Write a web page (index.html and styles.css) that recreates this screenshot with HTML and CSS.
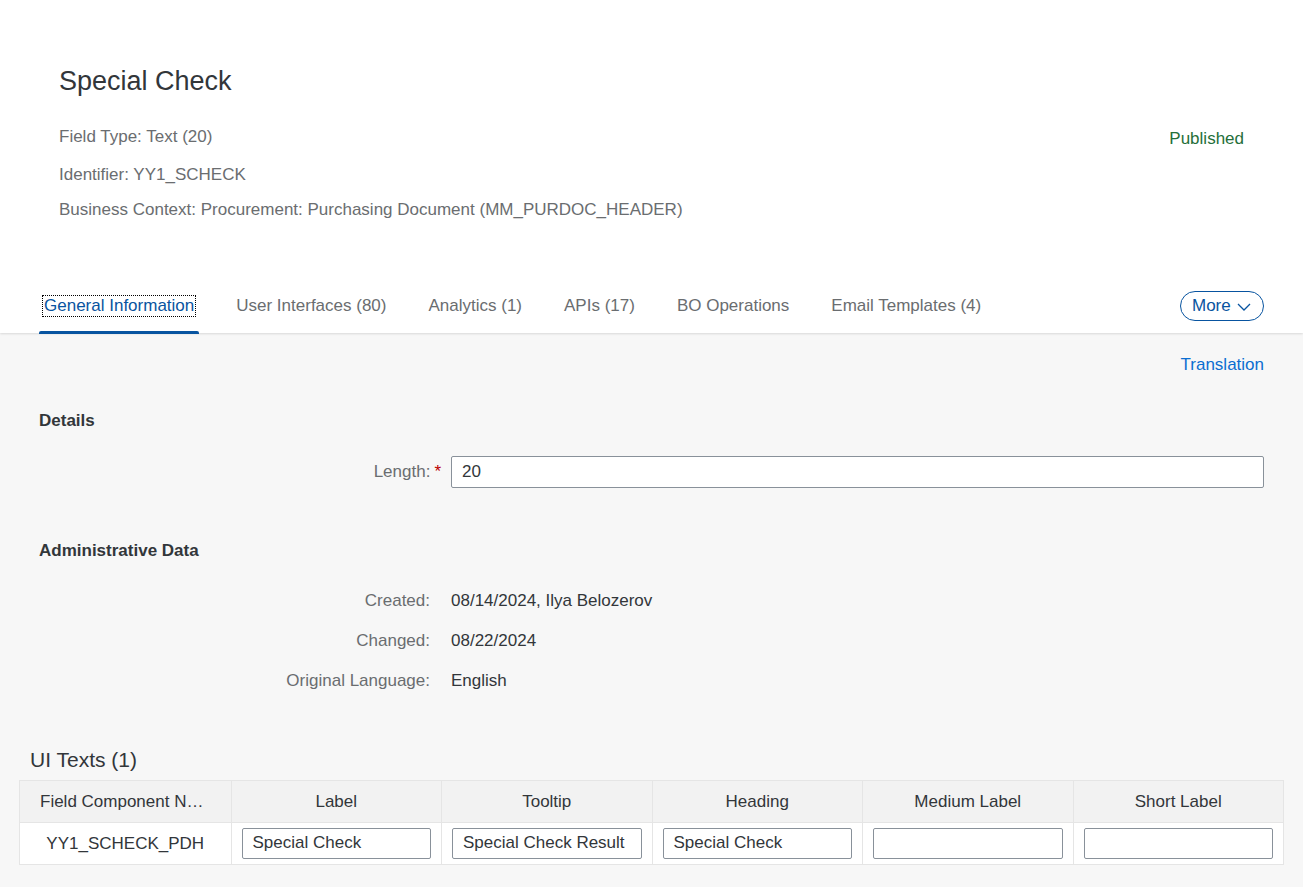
FILE: index.html
```html
<!DOCTYPE html>
<html lang="en">
<head>
<meta charset="utf-8">
<title>Special Check</title>
<link rel="stylesheet" href="styles.css">
</head>
<body>
<div class="page-header">
  <div class="obj-header">
    <div class="obj-main">
      <h1 class="obj-title">Special Check</h1>
      <div class="obj-attr">Field Type: Text (20)</div>
      <div class="obj-attr">Identifier: YY1_SCHECK</div>
      <div class="obj-attr">Business Context: Procurement: Purchasing Document (MM_PURDOC_HEADER)</div>
    </div>
    <div class="obj-status">Published</div>
  </div>
  <div class="tabbar">
    <div class="tabs">
      <div class="tab selected"><span class="tab-text focus">General Information</span></div>
      <div class="tab"><span class="tab-text">User Interfaces (80)</span></div>
      <div class="tab"><span class="tab-text">Analytics (1)</span></div>
      <div class="tab"><span class="tab-text">APIs (17)</span></div>
      <div class="tab"><span class="tab-text">BO Operations</span></div>
      <div class="tab"><span class="tab-text">Email Templates (4)</span></div>
    </div>
    <button class="more-btn">More
      <svg class="chev" width="14" height="8" viewBox="0 0 14 8"><path d="M1 1 L7 7 L13 1" fill="none" stroke="#0854a0" stroke-width="1.3"/></svg>
    </button>
  </div>
</div>
<div class="content">
  <div class="toolbar"><a class="link">Translation</a></div>
  <h2 class="section-title">Details</h2>
  <div class="form">
    <div class="form-row">
      <div class="form-label req-label">Length:<span class="req">*</span></div>
      <div class="form-value"><div class="input wide">20</div></div>
    </div>
  </div>
  <h2 class="section-title admin">Administrative Data</h2>
  <div class="form">
    <div class="form-row text-row">
      <div class="form-label">Created:</div>
      <div class="form-value">08/14/2024, Ilya Belozerov</div>
    </div>
    <div class="form-row text-row">
      <div class="form-label">Changed:</div>
      <div class="form-value">08/22/2024</div>
    </div>
    <div class="form-row text-row">
      <div class="form-label">Original Language:</div>
      <div class="form-value">English</div>
    </div>
  </div>
  <h2 class="table-title">UI Texts (1)</h2>
  <div class="table">
    <div class="th"><span class="ellip">Field Component Name</span></div>
    <div class="th">Label</div>
    <div class="th">Tooltip</div>
    <div class="th">Heading</div>
    <div class="th">Medium Label</div>
    <div class="th">Short Label</div>
    <div class="td">YY1_SCHECK_PDH</div>
    <div class="td"><div class="input cell">Special Check</div></div>
    <div class="td"><div class="input cell">Special Check Result</div></div>
    <div class="td"><div class="input cell">Special Check</div></div>
    <div class="td"><div class="input cell"></div></div>
    <div class="td"><div class="input cell"></div></div>
  </div>
</div>
</body>
</html>
```
FILE: styles.css
```css
* { box-sizing: border-box; }
html, body { margin: 0; padding: 0; }
body {
  font-family: "Liberation Sans", Arial, sans-serif;
  font-size: 17px;
  color: #32363a;
  background: #f7f7f7;
  width: 1303px;
  height: 887px;
  overflow: hidden;
}
.page-header {
  background: #fff;
  box-shadow: 0 1px 2px rgba(0,0,0,0.12);
  position: relative;
  z-index: 1;
}
.obj-header {
  display: flex;
  justify-content: space-between;
  padding: 64px 59px 0 59px;
}
.obj-title {
  margin: 0 0 29px 0;
  font-size: 27px;
  font-weight: normal;
  line-height: 34px;
  color: #32363a;
}
.obj-attr {
  color: #6a6d70;
  line-height: 20px;
  margin-bottom: 18px;
}
.obj-attr + .obj-attr + .obj-attr { margin-top: -3px; }
.obj-attr:last-child { margin-bottom: 0; }
.obj-status {
  color: #256f3a;
  margin-top: 65px;
  line-height: 20px;
}
.tabbar {
  display: flex;
  align-items: center;
  justify-content: space-between;
  padding: 0 39px;
  margin-top: 62px;
  height: 51px;
}
.tabs {
  display: flex;
  gap: 32px;
  height: 100%;
  align-items: stretch;
}
.tab {
  display: flex;
  align-items: center;
  padding: 0 4px;
  color: #6a6d70;
  position: relative;
  padding-bottom: 3px;
}
.tab-text { line-height: 20px; padding: 0 1px; }
.tab.selected { color: #0854a0; }
.tab.selected::after {
  content: "";
  position: absolute;
  left: 0; right: 0; bottom: -1px;
  height: 3px;
  background: #0854a0;
  border-radius: 2px 2px 0 0;
}
.focus { outline: 1px dotted #000; outline-offset: 0; }
.more-btn {
  font-family: inherit;
  font-size: 17px;
  color: #0854a0;
  background: #fff;
  border: 1px solid #0854a0;
  border-radius: 15px;
  height: 30px;
  width: 84px;
  padding: 0 0 0 11px;
  display: flex;
  align-items: center;
  gap: 6px;
  margin-bottom: 3px;
}
.chev { margin-top: 1px; }
.content { padding: 0 39px; }
.toolbar {
  display: flex;
  justify-content: flex-end;
  padding-top: 22px;
  height: 62px;
}
.link { color: #0a6ed1; line-height: 20px; }
.section-title {
  margin: 16px 0 0 0;
  font-size: 17px;
  font-weight: bold;
  line-height: 20px;
}
.section-title.admin { margin-top: 53px; }
.form { margin-top: 25px; }
.form-row {
  display: flex;
  align-items: center;
}
.form-label {
  width: 402px;
  flex: none;
  text-align: right;
  color: #6a6d70;
  padding-right: 11px;
  line-height: 20px;
}
.req-label { padding-right: 0; }
.req { color: #bb0000; margin-left: 4px; }
.form-value { flex: 1; padding-left: 10px; line-height: 20px; }
.text-row { height: 40px; }
.text-row:first-child { margin-top: -5px; }
.input {
  background: #fff;
  border: 1px solid #89919a;
  border-radius: 2px;
  color: #32363a;
  line-height: 20px;
}
.input.wide { height: 32px; padding: 5px 10px; }
.table-title {
  margin: 46px 0 0 -9px;
  font-size: 21px;
  font-weight: normal;
  line-height: 26px;
}
.table {
  margin: 7px -20px 0 -20px;
  display: grid;
  grid-template-columns: repeat(6, 1fr);
  border: 1px solid #e5e5e5;
  background: #fff;
}
.th {
  background: #f2f2f2;
  height: 42px;
  display: flex;
  align-items: center;
  justify-content: center;
  border-left: 1px solid #e5e5e5;
  border-bottom: 1px solid #e5e5e5;
  padding: 0 10px;
  overflow: hidden;
}
.th:first-child { padding: 0 20px; }
.th:first-child, .td:nth-child(7) { border-left: none; }
.ellip {
  white-space: nowrap;
  overflow: hidden;
  text-overflow: ellipsis;
  display: block;
  max-width: 100%;
}
.td {
  height: 41px;
  display: flex;
  align-items: center;
  justify-content: center;
  border-left: 1px solid #e5e5e5;
  padding: 0 10px;
}
.input.cell { width: 100%; height: 31px; padding: 4px 10px; }
```
